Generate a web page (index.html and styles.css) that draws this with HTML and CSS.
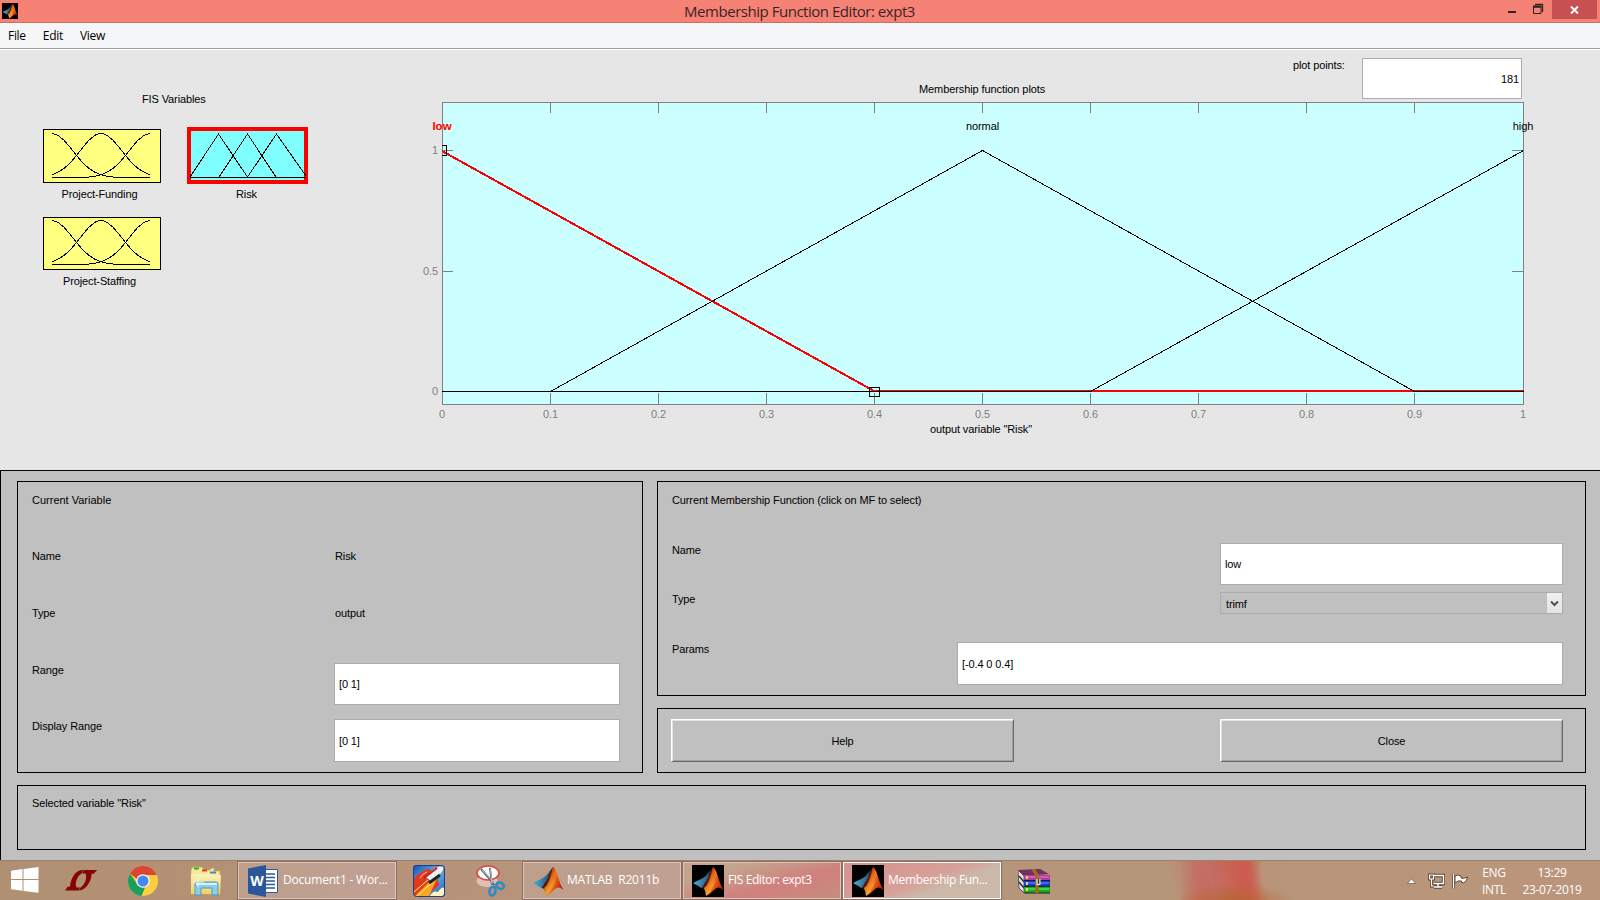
FILE: index.html
```html
<!DOCTYPE html>
<html lang="en">
<head>
<meta charset="utf-8">
<title>Membership Function Editor: expt3</title>
<link rel="stylesheet" href="styles.css">
</head>
<body>
<svg class="defs" width="0" height="0">
  <defs>
    <linearGradient id="flame" x1="0" y1="0" x2="1" y2="0.5">
      <stop offset="0" stop-color="#4a1008"/><stop offset=".35" stop-color="#a82a10"/>
      <stop offset=".55" stop-color="#f47a18"/><stop offset=".75" stop-color="#e04c14"/><stop offset="1" stop-color="#b02c10"/>
    </linearGradient>
    <linearGradient id="glow" x1="0" y1="0" x2="0" y2="1">
      <stop offset="0" stop-color="#d84810"/><stop offset="1" stop-color="#ffd23c"/>
    </linearGradient>
    <linearGradient id="wing" x1="0" y1="0" x2="1" y2="0">
      <stop offset="0" stop-color="#4cb0d8"/><stop offset="1" stop-color="#26547c"/>
    </linearGradient>
    <linearGradient id="folder" x1="0" y1="0" x2="0" y2="1">
      <stop offset="0" stop-color="#fdf3b4"/><stop offset="1" stop-color="#ecd06a"/>
    </linearGradient>
    <linearGradient id="sky" x1="0" y1="0" x2="1" y2="1">
      <stop offset="0" stop-color="#1450b4"/><stop offset=".5" stop-color="#68b4f0"/><stop offset="1" stop-color="#1c58b8"/>
    </linearGradient>
    <symbol id="matlab" viewBox="0 0 32 32">
      <path d="M1 18 L10 13.500 Q15 11 18 5 L16 17 L9.500 23 Z" fill="url(#wing)"/>
      <path d="M9.500 23 L16 13 Q18 5 21 2 L18 20 L13 26 Q12 23 9.500 23Z" fill="#54180e"/>
      <path d="M21 2 Q23.500 3 26 12 Q28 19 31.500 25 Q26 20 22 25 Q18 29 14 31 Q14 27 12 23 Q17 18 21 2Z" fill="url(#flame)"/>
      <path d="M21 2 Q22.500 10 23.500 16 Q21 24 14 31 Q14 27 12 23 Q18 20 21 2Z" fill="url(#glow)" opacity=".65"/>
    </symbol>
    <g id="gaussians" fill="none" stroke="#000" stroke-width="1" shape-rendering="crispEdges">
      <path d="M9 4.500 15 6.300 21.300 11.500 27.400 18.700 33.500 26.500 39.600 33.600 45.700 39.300 51.900 43.200 58 45.700 64 47.200 70 48 76 48.500H107"/>
      <path d="M9 45.700 15 43.200 21.300 39.300 27.400 33.600 33.500 26.500 39.600 18.700 45.700 11.500 51.900 6.300 56 4.500H60L64 6.300 70.300 11.500 76.400 18.700 82.500 26.500 88.600 33.600 94.700 39.300 101 43.200 107 45.700"/>
      <path d="M9 48.500H40L46 48 52 47.200 58 45.700 64 43.200 70.300 39.300 76.400 33.600 82.500 26.500 88.600 18.700 94.700 11.500 101 6.300 107 4.500"/>
    </g>
  </defs>
</svg>

<header class="titlebar">
  <span class="app-icon"><svg width="16" height="16"><use href="#matlab"/></svg></span>
  <h1 class="title">Membership Function Editor: expt3</h1>
  <div class="window-buttons">
    <svg width="44" height="19" fill="none" stroke="#2b2325"><path d="M0 12H8" stroke-width="2"/><path d="M25.500 7H33V13.500H25.500Z" stroke-width="1"/><path d="M25 6.500H33.500" stroke-width="2"/><path d="M27 4.500H34.500V12" stroke-width="1.300"/></svg>
    <span class="close"><svg width="9" height="8" stroke="#fff" stroke-width="2"><path d="M1 .5 8 7.500M8 .5 1 7.500"/></svg></span>
  </div>
</header>
<nav class="menu"><span>File</span><span>Edit</span><span>View</span></nav>

<main>
<section class="upper">
  <div class="variables">
    <h2 class="var-title">FIS Variables</h2>
    <div class="var-grid">
      <figure><div class="thumb-cell"><svg width="118" height="54"><rect class="thumb" x=".5" y=".5" width="117" height="53"/><use href="#gaussians"/></svg></div><figcaption>Project-Funding</figcaption></figure>
      <figure class="output"><div class="thumb-cell"><svg class="thumb-output" width="121" height="57" shape-rendering="crispEdges"><rect x="2" y="2" width="117" height="53" fill="#80ffff" stroke="#f00" stroke-width="4"/><g fill="none" stroke="#000"><path d="M3 50.500H119"/><path d="M3 50 31.500 7 60.500 50M32 50 60.500 7 89 50M60.500 50 89.500 7 119 49"/></g></svg></div><figcaption>Risk</figcaption></figure>
      <figure><div class="thumb-cell second"><svg width="118" height="53"><rect class="thumb" x=".5" y=".5" width="117" height="52"/><use href="#gaussians" y="-1"/></svg></div><figcaption>Project-Staffing</figcaption></figure>
    </div>
  </div>
  <div class="plot">
    <div class="plot-head">
      <h2 class="plot-title">Membership function plots</h2>
      <label class="points-label">plot points:</label>
      <div class="field points">181</div>
    </div>
    <svg class="chart" width="1190" height="345" viewBox="410 100 1190 345">
      <rect x="442.500" y="102.500" width="1081" height="302" fill="#ccffff" stroke="#808080" shape-rendering="crispEdges"/>
      <path stroke="#808080" fill="none" shape-rendering="crispEdges" d="M550.500 103v10M658.500 103v10M766.500 103v10M874.500 103v10M982.500 103v10M1090.500 103v10M1198.500 103v10M1306.500 103v10M1414.500 103v10M550.500 404v-11M658.500 404v-11M766.500 404v-11M874.500 404v-11M982.500 404v-11M1090.500 404v-11M1198.500 404v-11M1306.500 404v-11M1414.500 404v-11M443 150.500h10M443 271.500h10M1512 150.500h11M1512 271.500h11"/>
      <g fill="none" shape-rendering="crispEdges">
        <path d="M442 151 874 391H1524" stroke="#f00" stroke-width="2"/>
        <path d="M442 391.500H550.500L982.500 150.500 1414.500 391.500H1524" stroke="#000"/>
        <path d="M442 391.500H1090.500L1523.500 150.500" stroke="#000"/>
        <path d="M442 145.500H446.500V155.500H442M869.500 387.500H879.500V396.500H869.500Z" stroke="#000"/>
      </g>
      <g class="ticks" text-anchor="middle">
        <text x="442" y="418">0</text><text x="550.500" y="418">0.1</text><text x="658.500" y="418">0.2</text><text x="766.500" y="418">0.3</text><text x="874.500" y="418">0.4</text><text x="982.500" y="418">0.5</text><text x="1090.500" y="418">0.6</text><text x="1198.500" y="418">0.7</text><text x="1306.500" y="418">0.8</text><text x="1414.500" y="418">0.9</text><text x="1523" y="418">1</text>
      </g>
      <g class="ticks" text-anchor="end"><text x="438" y="154">1</text><text x="438" y="275">0.5</text><text x="438" y="395">0</text></g>
      <g class="names" text-anchor="middle">
        <text class="selected" x="442" y="130">low</text><text x="982.500" y="130">normal</text><text x="1523" y="130">high</text>
        <text x="981" y="433" textLength="102">output variable "Risk"</text>
      </g>
    </svg>
  </div>
</section>

<section class="lower">
  <div class="panel current-variable">
    <span class="wide">Current Variable</span>
    <span>Name</span><span class="value">Risk</span>
    <span>Type</span><span class="value">output</span>
    <span>Range</span><div class="field range">[0 1]</div>
    <span>Display Range</span><div class="field">[0 1]</div>
  </div>
  <div class="right">
    <div class="panel current-mf">
      <span>Current Membership Function (click on MF to select)</span>
      <div class="row"><span>Name</span><div class="field short">low</div></div>
      <div class="row"><span>Type</span><div class="select short"><span>trimf</span><i><svg width="9" height="8" fill="none" stroke="#505050" stroke-width="2"><path d="M1 2.500 4.500 6 8 2.500"/></svg></i></div></div>
      <div class="row"><span>Params</span><div class="field long">[-0.4 0 0.4]</div></div>
    </div>
    <div class="panel actions"><button>Help</button><button>Close</button></div>
  </div>
  <div class="panel status">Selected variable "Risk"</div>
</section>
</main>

<footer class="taskbar">
  <div class="start"><svg width="28" height="26" fill="#fff"><path d="M0 3.800 11.500 2V12H0ZM12.500 1.900 27.500 0V12H12.500ZM0 13H11.500V23.800L0 22.200ZM12.500 13H27.500V25.700L12.500 23.900Z"/></svg></div>
  <div class="cell"><svg width="32" height="21" fill="#860404"><path d="M0 20.500 2.500 17 5 16.500Q5.500 10 9 5Q12.500 0 18 0L16.500 3.500Q13.500 5 11.800 9.500Q10 14 11.500 17.500H15L13.500 20.500ZM18.500 0H32L29 3.500 26.500 4Q26.500 9.500 23 14.500Q19.500 20 14 20.500L15.500 17.500Q18.500 16 20.200 11.500Q22 7 20.500 3.500H17Z"/></svg></div>
  <div class="cell"><svg width="30" height="30" viewBox="0 0 30 30"><circle cx="15" cy="15" r="15" fill="#ffcd42"/><path d="M2 7.500A15 15 0 0 1 28 7.500L28.500 9H15A6.500 6.500 0 0 0 9 13Z" fill="#dc4437"/><path d="M2 7.500 9.300 18.300Q12 22 17 21.500L13.500 30A15 15 0 0 1 2 7.500Z" fill="#1b9f5c"/><circle cx="15" cy="15" r="6.800" fill="#f4f4f4"/><circle cx="15" cy="15" r="5.500" fill="#4688f1"/></svg></div>
  <div class="cell explorer"><svg width="32" height="30"><path d="M1 5Q1 1 4 1H12L14 4H20L22 2H24V5H30V28H1Z" fill="#f7e79a" stroke="#c8ab4c" stroke-width=".7"/><path d="M4 1.500h5v2H4z" fill="#18b428"/><path d="M12 3.500h5v2h-5z" fill="#d84030"/><path d="M20 5.500h6v2h-6z" fill="#2890e8"/><path d="M1 8H20L22 9H31L30 28H1Z" fill="url(#folder)"/><path d="M5 18Q5 16 7 16H26Q28 16 28 18V29H22V22H11V29H5Z" fill="#8ccdea" stroke="#4c9cc8"/><path d="M6 18H27" stroke="#d7f2fc" stroke-width="2"/><path d="M8 11V21M3 16H14" stroke="#fff" opacity=".8"/></svg></div>
  <div class="task word"><svg width="32" height="32"><path d="M17 4.500H29.500V27.500H17Z" fill="#fff" stroke="#2b579a"/><path d="M18 9H27M18 12.500H27M18 16H27M18 19.500H27M18 23H27" stroke="#2b579a" stroke-width="1.500"/><path d="M0 3.500 18 0V32L0 28.500Z" fill="#2b579a"/><text class="w" x="9" y="21" text-anchor="middle">W</text></svg><span>Document1 - Wor...</span></div>
  <div class="cell"><svg width="32" height="32"><rect width="32" height="32" rx="3" fill="url(#sky)"/><path d="M1 14Q8 5 16 4L23 8 26 20 15 30 1 31Z" fill="#e63818"/><path d="M7 13Q10 8 14 7" stroke="#fff" fill="none" opacity=".7"/><path d="M2 31 20 13 24 14 16 31Z" fill="#fca51e"/><path d="M1 27 16 14M4 31 21 16" stroke="#fff0a0" stroke-width="1"/><path d="M17 31Q20 25 25 27Q29 21 31 23V31Z" fill="#fff3be"/><path d="M12 12 21 3Q27 0 31 1Q32 5 27 10L19 17Z" fill="#eceff5" stroke="#777b8a"/><path d="M16 18 27 10" stroke="#222" stroke-width="3"/><path d="M11 13 24 3" stroke="#c71f18" stroke-width="2"/><rect x=".5" y=".5" width="31" height="31" rx="3" fill="none" stroke="#174086"/></svg></div>
  <div class="cell"><svg width="32" height="32"><ellipse cx="12" cy="16" rx="11" ry="6.500" fill="#e0bfb2" stroke="#c58f84"/><ellipse cx="13" cy="8" rx="11" ry="7" fill="#fff" stroke="#d94444" stroke-width="1.500"/><path d="M6 4 20 20M15 3 17 20" stroke="#56606a" stroke-width="2"/><path d="M7 5 20 19M15.500 4 17 19" stroke="#d8dde2" stroke-width=".8"/><g fill="none" stroke="#298cc9" stroke-width="2.500"><ellipse cx="25.500" cy="20.500" rx="4" ry="3" transform="rotate(30 25 20)"/><ellipse cx="17.500" cy="26" rx="3" ry="4.500" transform="rotate(12 17 26)"/></g></svg></div>
  <div class="task"><svg width="32" height="32"><use href="#matlab"/></svg><span>MATLAB&nbsp; R2011b</span></div>
  <div class="task fis"><svg class="dark" width="32" height="32"><use href="#matlab"/></svg><span>FIS Editor: expt3</span></div>
  <div class="task active"><svg class="dark" width="32" height="32"><use href="#matlab"/></svg><span>Membership Fun...</span></div>
  <div class="cell rar"><svg width="32" height="25"><path d="M0 1 6 7V24L1 19Z" fill="#e5e5ed" stroke="#555"/><path d="M1 7 6 13M1 13 6 19" stroke="#333" stroke-width="1.500"/><path d="M0 1 22 0 31 5 6 7Z" fill="#70305f"/><path d="M6 6H32V11H6Z" fill="#b13b96"/><path d="M6 12H32V17H6Z" fill="#1737d7"/><path d="M6 18H32V24H6Z" fill="#14ae20"/><path d="M6 11.500H32M6 17.500H32M6 24H32" stroke="#182028"/><path d="M7 8H31" stroke="#df87d0"/><path d="M7 14H31" stroke="#68a0ff"/><path d="M7 20H31" stroke="#6dff59"/><path d="M15 0 19 6V24" fill="none" stroke="#a6691f" stroke-width="3.500"/><path d="M20.500 10V16" stroke="#eee" stroke-width="4"/><path d="M20.500 10V15" stroke="#333" stroke-width="1.500"/><path d="M9 7V24" stroke="#e7d94a" stroke-width="2" stroke-dasharray="3 3"/></svg></div>
  <div class="tray">
    <svg class="up" width="9" height="6"><path d="M.5 5.500 4.500 .8 8.500 5.500Z" fill="#fff" stroke="#6d5748" stroke-width=".7"/></svg>
    <svg class="net" width="17" height="16" fill="none"><path d="M6 2.500H15.500V10.500H6M10 10V13.500M6 14H14" stroke="#5b4537" stroke-width="3.400"/><path d="M1.500 2H5.500V6H1.500ZM3.500 6V13H6" stroke="#5b4537" stroke-width="3"/><path d="M6 2.500H15.500V10.500H6M10 10V13.500M6 14H14" stroke="#fff" stroke-width="1.400"/><path d="M1.500 2H5.500V6H1.500ZM3.500 6V13H6" stroke="#fff" stroke-width="1.200"/></svg>
    <svg class="flag" width="17" height="17"><path d="M1.500 1V15.500" stroke="#5b4537" stroke-width="3"/><path d="M3 3Q6 1 9 3V5Q12 6 15.500 4Q14 11 9.500 9.500V8Q6 7 3 10Z" fill="#fff" stroke="#5b4537"/><path d="M1.500 1V15.500" stroke="#fff" stroke-width="1.300"/></svg>
    <div class="lang"><span>ENG</span><span>INTL</span></div>
    <div class="clock"><span>13:29</span><span>23-07-2019</span></div>
  </div>
</footer>
</body>
</html>
```
FILE: styles.css
```css
* { box-sizing: border-box; }
body {
  margin: 0;
  width: 1600px;
  height: 900px;
  overflow: hidden;
  display: flex;
  flex-direction: column;
  font: 11px/14px "Liberation Sans", Arial, sans-serif;
  letter-spacing: -0.12px;
  color: #000;
}
h1, h2, figure { margin: 0; font-weight: normal; font-size: inherit; }
svg { display: block; flex: none; }
.defs { position: absolute; }

/* window frame */
.titlebar {
  height: 23px;
  flex: none;
  background: #f68275;
  border-bottom: 1px solid #cc6e64;
  display: grid;
  grid-template-columns: 200px 1fr 200px;
}
.app-icon { width: 16px; height: 16px; margin: 3px 0 0 2px; background: #000; }
.title {
  text-align: center;
  font: 15px/22px "Open Sans", "Noto Sans", sans-serif;
  letter-spacing: -0.47px;
  padding-right: 1px;
  color: #3b2426;
}
.window-buttons { display: flex; justify-content: flex-end; padding-right: 3px; }
.close {
  width: 45px;
  height: 19px;
  background: #c75050;
  display: flex;
  align-items: center;
  justify-content: center;
}
.menu {
  height: 27px;
  flex: none;
  display: flex;
  gap: 17px;
  padding-left: 8px;
  background: #f5f6f7;
  border-bottom: 1px solid #fff;
  box-shadow: inset 0 -1px #a0a0a0;
  font: 12px/26px "Open Sans", "Noto Sans", sans-serif;
  letter-spacing: -0.3px;
}

main { height: 810px; flex: none; }

/* variable palette and plot */
.upper { height: 420px; background: #e6e6e6; display: flex; }
.variables { width: 410px; padding-left: 43px; }
.var-title { margin-top: 42px; padding-left: 99px; height: 14px; }
.var-grid {
  display: grid;
  grid-template-columns: 144px 121px;
  grid-template-rows: 87px 90px;
  padding-top: 20px;
}
.thumb-cell { height: 61px; display: flex; padding-top: 3px; }
.thumb-cell.second { padding-top: 4px; }
.thumb { fill: #ffff80; stroke: #000; shape-rendering: crispEdges; }
.thumb-output { margin-top: -2px; }
figcaption { width: 113px; text-align: center; }
.output figcaption { width: 119px; }
.plot { width: 1190px; }
.plot-head { height: 50px; display: flex; align-items: flex-start; }
.plot-title { width: 126px; margin: 32px 0 0 509px; letter-spacing: -0.09px; white-space: nowrap; }
.points-label { width: 69px; margin: 8px 0 0 248px; }
.field {
  background: #fff;
  border: 1px solid #ababb3;
  display: flex;
  align-items: center;
  padding: 0 4px;
}
.field.points { width: 160px; height: 41px; margin-top: 8px; justify-content: flex-end; padding: 0 2px; }
.ticks { fill: #808080; }
.names .selected { fill: #f00; font-weight: bold; font-size: 11.5px; letter-spacing: 0; }

/* control panels */
.lower {
  height: 390px;
  background: #c0c0c0;
  border: solid #000;
  border-width: 1px 0 0 1px;
  padding: 10px 14px 0 16px;
  display: grid;
  grid-template-columns: 626px 929px;
  grid-template-rows: 292px 65px;
  gap: 12px 14px;
}
.panel { border: 1px solid #000; padding-left: 14px; }
.current-variable {
  padding-top: 11px;
  display: grid;
  grid-template-columns: 302px 286px;
  grid-template-rows: 56px 57px 57px 56px 43px;
}
.current-variable .wide { grid-column: 1 / 3; letter-spacing: 0; }
.value { padding-left: 1px; }
.current-variable .field { height: 43px; }
.current-variable .field.range { height: 42px; padding-bottom: 1px; }
.right { display: grid; grid-template-rows: 215px 65px; gap: 12px; }
.current-mf {
  padding: 11px 22px 0 14px;
  display: grid;
  grid-template-rows: 50px 49px 50px 43px;
}
.row { display: flex; justify-content: space-between; }
.row .field { height: 43px; }
.short { width: 343px; }
.long { width: 606px; }
.row .field.short { height: 42px; }
.select { height: 22px; border: 1px solid #ababb3; display: flex; justify-content: space-between; }
.select span { padding: 4px 0 0 5px; }
.select i {
  width: 15px;
  background: linear-gradient(#f0f0f0, #e4e4e4);
  display: flex;
  align-items: center;
  justify-content: center;
}
.actions { padding: 10px 22px 0 13px; display: flex; justify-content: space-between; align-items: flex-start; }
.actions button {
  width: 343px;
  height: 43px;
  padding: 0;
  border: 1px solid;
  border-color: #fff #696969 #696969 #fff;
  box-shadow: inset 1px 1px #e3e3e3, inset -1px -1px #a0a0a0;
  background: #c0c0c0;
  font: inherit;
  letter-spacing: inherit;
  color: #000;
}
.status { grid-column: 1 / 3; padding-top: 10px; }

/* taskbar */
.taskbar {
  height: 40px;
  flex: none;
  border-top: 1px solid #a07f69;
  display: flex;
  background:
    radial-gradient(ellipse 60px 20px at 1235px 42px, #b5642ccc, transparent),
    linear-gradient(75deg, #b5917600 0, #b5917600 1135px, #c0746acc 1175px, #cc5c50 1205px, #c8604f00 1225px),
    linear-gradient(90deg, #b1917400 0, #b5917600 1180px, #cc5c50 1205px, #c8604f 1248px, #bb9279 1262px, #bb967c00 1290px),
    linear-gradient(90deg, #b09072, #b8937b 500px, #b59679 1100px, #bb957b);
  font: 12px/17px "Open Sans", "Noto Sans", sans-serif;
  letter-spacing: -0.2px;
  color: #fff;
}
.taskbar > div { flex: none; }
.start { width: 50px; padding: 6px 0 0 11px; }
.cell { width: 62px; display: flex; align-items: center; justify-content: center; }
.cell.explorer { width: 63px; }
.cell.rar { width: 64px; padding-top: 1px; }
.task {
  width: 160px;
  height: 39px;
  border: 1px solid #8d6f61;
  box-shadow: inset 0 0 0 1px #dcc4b8;
  background: linear-gradient(90deg, #bd9f8b, #c1a094);
  display: flex;
  align-items: center;
  gap: 3px;
  padding-left: 9px;
  white-space: nowrap;
}
.task span { padding-bottom: 2px; }
.task.word { margin-right: 1px; padding-left: 10px; letter-spacing: -0.2px; }
.task.fis { background: linear-gradient(165deg, #c4a48c 25%, #d0807e 60%, #c68d7c); letter-spacing: -0.4px; gap: 4px; }
.task.active { background: linear-gradient(160deg, #d69490 15%, #d8a09a 50%, #cbb8a8 65%, #ccb9a9); box-shadow: inset 0 0 0 1px #fff; letter-spacing: -0.3px; gap: 4px; }
.dark { background: #000; }
.w { font: bold 14px "Open Sans", sans-serif; fill: #fff; }
.tray { margin-left: auto; display: flex; padding-right: 17px; }
.up { margin: 17px 12px 0 0; }
.net { margin: 12px 7px 0 0; }
.flag { margin: 12px 12px 0 0; }
.lang, .clock { display: flex; flex-direction: column; align-items: center; padding-top: 3px; white-space: nowrap; }
.lang { width: 26px; margin-right: 14px; letter-spacing: -0.35px; }
.clock { width: 62px; letter-spacing: -0.35px; }
```
